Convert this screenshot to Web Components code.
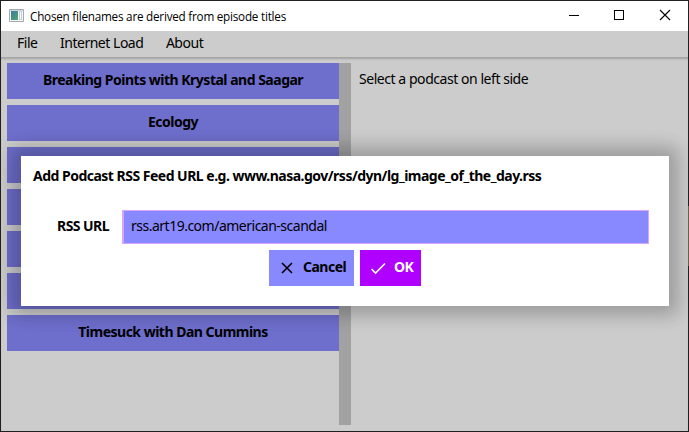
<!DOCTYPE html>
<html lang="en"><head><meta charset="utf-8"><title>Chosen filenames are derived from episode titles</title>
<style>html,body{margin:0;height:100%;overflow:hidden}body{font-family:"Noto Sans","Open Sans",sans-serif;font-size:14px;color:#000}</style></head>
<body>
<app-window>
  <title-bar slot="title">Chosen filenames are derived from episode titles</title-bar>
  <menu-bar slot="menu"><menu-entry>File</menu-entry><menu-entry>Internet Load</menu-entry><menu-entry>About</menu-entry></menu-bar>
  <podcast-list slot="list">
    <podcast-item>Breaking Points with Krystal and Saagar</podcast-item>
    <podcast-item>Ecology</podcast-item>
    <podcast-item></podcast-item><podcast-item></podcast-item><podcast-item></podcast-item><podcast-item></podcast-item>
    <podcast-item>Timesuck with Dan Cummins</podcast-item>
  </podcast-list>
  <detail-pane slot="detail">Select a podcast on left side</detail-pane>
  <feed-dialog slot="dialog">
    <span slot="heading">Add Podcast RSS Feed URL e.g. www.nasa.gov/rss/dyn/lg_image_of_the_day.rss</span>
    <url-field slot="field" label="RSS URL">rss.art19.com/american-scandal</url-field>
    <dialog-button slot="actions" icon="cross">Cancel</dialog-button>
    <dialog-button slot="actions" icon="check" primary>OK</dialog-button>
  </feed-dialog>
</app-window>
<script>
const define = (name, html) => customElements.define(name, class extends HTMLElement {
  constructor() {
    super();
    this.attachShadow({mode: 'open'}).innerHTML = typeof html === 'function' ? html(this) : html;
  }
});

define('app-window', `<style>
:host{display:flex;box-sizing:border-box;width:689px;height:432px;padding:1px;background:linear-gradient(#211f20 206px,#6b5f45 206px,#6b5f45 266px,#211f20 266px) right/1px 100% no-repeat,#211f20}
.frame{flex:1;display:flex;flex-direction:column;background:#ccc;position:relative;overflow:hidden}
main{flex:1;display:grid;grid-template-columns:344px 1fr;min-height:0;padding:6px 0 6px 6px;box-shadow:inset 0 3px 2px -1px #a3a3a3}
.overlay{position:absolute;left:20px;top:155px}
</style><div class="frame"><slot name="title"></slot><slot name="menu"></slot><main><slot name="list"></slot><slot name="detail"></slot></main><div class="overlay"><slot name="dialog"></slot></div></div>`);

define('title-bar', `<style>
:host{display:flex;align-items:center;height:30px;flex:none;background:#fff;font:11.7px "Open Sans","Noto Sans",sans-serif;white-space:nowrap}
.icon{margin:0 6px 1px 8px;flex:none}.text{flex:1;letter-spacing:-.225px}
.controls{flex:none;display:block}
</style><svg class="icon" width="15" height="13" viewBox="0 0 15 13"><defs><linearGradient id="g" x2="1" y2="1"><stop stop-color="#367ca6"/><stop offset="1" stop-color="#55a56c"/></linearGradient></defs><path fill="#f5f5f5" stroke="#a5a9ad" d="M.5.5h14v12H.5z"/><path fill="#cdd5df" d="M1 1h13v1H1z"/><path fill="url(#g)" d="M2 2h7v9H2z"/><path fill="#c3d3d8" d="M10 2h3v9h-3z"/><path fill="#f5f5f5" d="M11 3h1v7h-1z"/></svg><span class="text"><slot></slot></span>
<svg class="controls" width="138" height="30" fill="none" stroke="#000" shape-rendering="crispEdges"><path d="M19 14.5h10M64.500 9.500h9v9h-9z"/><path shape-rendering="auto" stroke-width="1.100" d="m110 9 10 10m0-10-10 10" /></svg>`);

define('menu-bar', `<style>:host{display:flex;gap:22.5px;align-items:center;height:26px;flex:none;padding-left:16px;background:#ccc}</style><slot></slot>`);
define('menu-entry', `<style>:host{display:block;line-height:20px;padding-bottom:2px;letter-spacing:-.48px}</style><slot></slot>`);

define('podcast-list', `<style>
:host{display:flex;min-height:0}
.items{flex:1;display:flex;flex-direction:column;gap:6px}
.track{width:12px;background:#a2a2a2}
</style><div class="items"><slot></slot></div><div class="track"></div>`);
define('podcast-item', `<style>:host{display:flex;box-sizing:border-box;height:36px;flex:none;align-items:center;justify-content:center;background:#6e6ecc;font-weight:700;letter-spacing:-.5px;padding-bottom:3px;white-space:nowrap}</style><slot></slot>`);
define('detail-pane', `<style>:host{display:block;padding:6px 8px;line-height:20px;letter-spacing:-.45px}</style><slot></slot>`);

define('feed-dialog', `<style>
:host{display:flex;flex-direction:column;box-sizing:border-box;width:648px;height:150px;padding:10px 20px 20px 12px;background:#fff;box-shadow:0 0 16px 9px rgba(0,0,0,.19),0 0 24px 6px rgba(0,0,0,.07)}
h1{margin:0 0 24px;font-size:14px;line-height:20px;font-weight:700;letter-spacing:-.51px;white-space:nowrap}
footer{display:flex;gap:6px;margin:6px 0 0 236px}
</style><h1><slot name="heading"></slot></h1><slot name="field"></slot><footer><slot name="actions"></slot></footer>`);

define('url-field', el => `<style>
:host{display:grid;grid-template-columns:89px 527px;height:34px;line-height:31px}
label{font-weight:700;letter-spacing:-.55px;padding-left:24px}
.box{box-sizing:border-box;border:2px solid #d9a6ff;border-width:1px 1px 1px 2px;background:#8888ff;padding-left:7px;line-height:29px;letter-spacing:-.5px}
</style><label>${el.getAttribute('label')}</label><div class="box"><slot></slot></div>`);

const glyphs = {cross: 'm3 3 10 10M13 3 3 13', check: 'm1.500 9 4 4L15 3.500'};
define('dialog-button', el => `<style>
:host{display:flex;box-sizing:border-box;width:85px;height:36px;background:#8888ff;font-weight:700;letter-spacing:-.5px;line-height:34px;padding-left:10px;align-items:center;white-space:nowrap}
:host([primary]){width:61px;background:#b000ff;color:#fff}
svg{margin-right:8px;flex:none}span{height:36px}
</style><svg width="16" height="16" fill="none" stroke="currentColor" stroke-width="1.650"><path d="${glyphs[el.getAttribute('icon')]}"/></svg><span><slot></slot></span>`);
</script></body></html>
